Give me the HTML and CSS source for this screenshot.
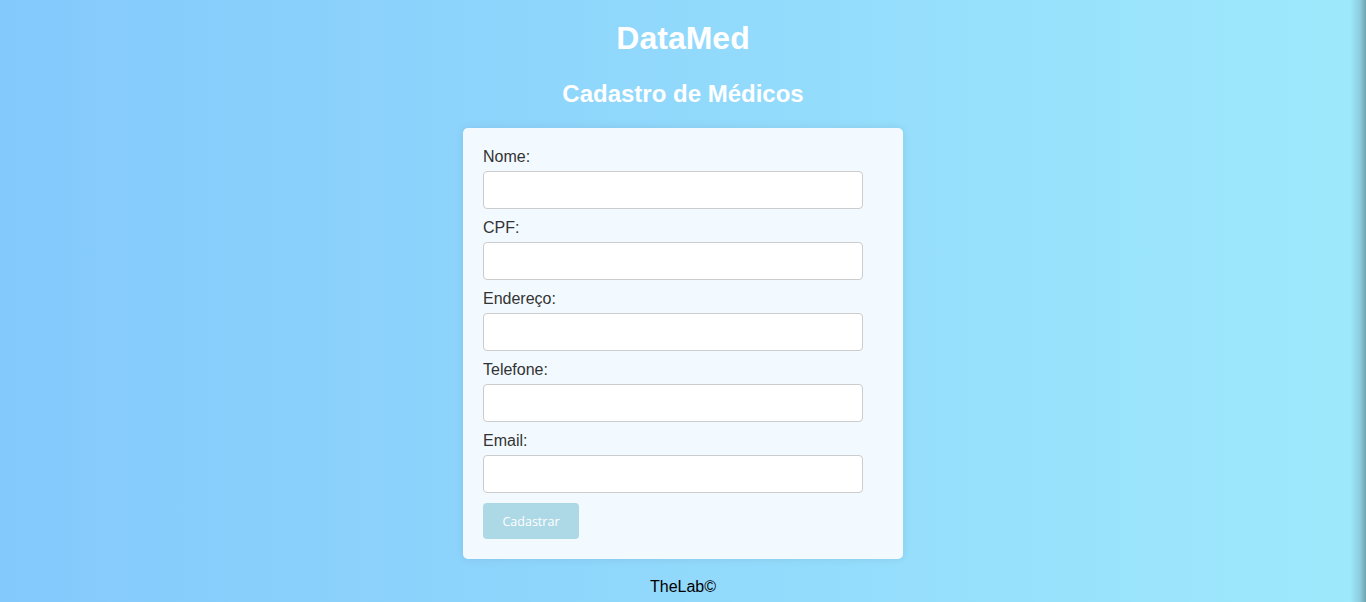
FILE: index.html
```html
<!DOCTYPE html>
<html lang="pt-BR">
<head>
<meta charset="utf-8">
<title>DataMed - Cadastro de Médicos</title>
<link rel="stylesheet" href="styles.css">
</head>
<body>
  <header class="header">
    <h1 class="brand">DataMed</h1>
    <h2 class="title">Cadastro de Médicos</h2>
  </header>
  <main class="main">
    <form class="card">
      <label class="field">
        <span class="label">Nome:</span>
        <input class="input" type="text">
      </label>
      <label class="field">
        <span class="label">CPF:</span>
        <input class="input" type="text">
      </label>
      <label class="field">
        <span class="label">Endereço:</span>
        <input class="input" type="text">
      </label>
      <label class="field">
        <span class="label">Telefone:</span>
        <input class="input" type="text">
      </label>
      <label class="field">
        <span class="label">Email:</span>
        <input class="input" type="text">
      </label>
      <button class="btn" type="button">Cadastrar</button>
    </form>
  </main>
  <footer class="footer">TheLab©</footer>
</body>
</html>
```

FILE: styles.css
```css
html, body {
  margin: 0;
  padding: 0;
}
body {
  min-height: 100vh;
  font-family: "Liberation Sans", Arial, sans-serif;
  background:
    linear-gradient(to left, rgba(0, 0, 0, 0.3), rgba(0, 0, 0, 0.12) 6px, rgba(0, 0, 0, 0) 16px),
    linear-gradient(to right, #84c9fc, #9fe9fc);
  display: flex;
  flex-direction: column;
  align-items: center;
}
.header {
  text-align: center;
  color: #fff;
  padding-top: 20px;
}
.brand {
  margin: 0 0 23px;
  font-size: 32px;
  font-weight: bold;
  line-height: 37px;
}
.title {
  margin: 0 0 20px;
  font-size: 24px;
  font-weight: bold;
  line-height: 28px;
}
.card {
  width: 440px;
  box-sizing: border-box;
  padding: 20px;
  background: #f2faff;
  border-radius: 5px;
  box-shadow: 0 0 10px rgba(0, 0, 0, 0.08);
  display: flex;
  flex-direction: column;
}
.field {
  display: flex;
  flex-direction: column;
  margin-bottom: 10px;
}
.label {
  font-size: 16px;
  line-height: 18px;
  color: #333;
  margin-bottom: 5px;
}
.input {
  width: 380px;
  height: 38px;
  box-sizing: border-box;
  padding: 10px;
  font-size: 14px;
  border: 1px solid #ccc;
  border-radius: 4px;
  background: #fff;
}
.btn {
  align-self: flex-start;
  width: 96px;
  height: 36px;
  padding: 0;
  border: none;
  border-radius: 4px;
  background: #add8e6;
  color: #fff;
  font-family: "Open Sans", "DejaVu Sans", sans-serif;
  font-size: 12.5px;
}
.footer {
  margin-top: 19px;
  font-size: 16px;
  line-height: 18px;
  color: #000;
  text-align: center;
}
```
